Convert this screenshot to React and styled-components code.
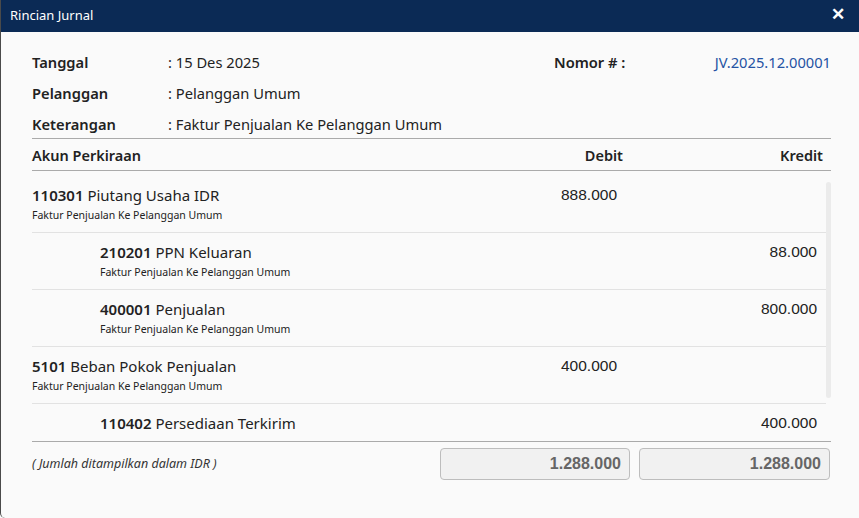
import React from "react";
import styled, { createGlobalStyle } from "styled-components";

const GlobalStyle = createGlobalStyle`
  html, body { margin: 0; padding: 0; background: #fafafa; }
  body { font-family: "Segoe UI", "Noto Sans", sans-serif; color: #222; }
`;

const Dialog = styled.div`
  width: 859px;
  height: 518px;
  box-sizing: border-box;
  background: #fafafa;
  border-left: 1px solid #4a4a4a;
  border-bottom-left-radius: 5px;
  display: flex;
  flex-direction: column;
  overflow: hidden;
`;

const TitleBar = styled.div`
  height: 32px;
  flex: none;
  background: #0b2a55;
  color: #fff;
  display: flex;
  align-items: center;
  justify-content: space-between;
  padding: 0 14px 3px 9px;
  font-size: 13px;
  box-sizing: border-box;
`;

const Close = styled.button`
  border: none;
  background: none;
  color: #fff;
  padding: 0;
  font-size: 17px;
  font-weight: 700;
  line-height: 1;
  cursor: pointer;
  font-family: "Liberation Sans", sans-serif;
`;

const Content = styled.div`
  padding: 0 28px 0 31px;
  display: flex;
  flex-direction: column;
`;

const Info = styled.div`
  display: grid;
  grid-template-columns: 136px 1fr 277px;
  row-gap: 11px;
  padding: 20px 0 4px;
  font-size: 14.7px;
  line-height: 20px;
`;

const Label = styled.div`
  font-weight: 600;
`;

const Value = styled.div`
  white-space: nowrap;
`;

const NoBlock = styled.div`
  display: flex;
  justify-content: space-between;
`;

const NoLabel = styled.span`
  font-weight: 600;
`;

const NoValue = styled.span`
  color: #2553a3;
  font-size: 14.7px;
`;

const cols = `1fr 200px 200px`;

const HeadRow = styled.div`
  display: grid;
  grid-template-columns: ${cols};
  border-top: 1px solid #aaa;
  border-bottom: 1px solid #aaa;
  height: 31px;
  align-items: center;
  font-size: 14.5px;
  font-weight: 600;
`;

const HeadCell = styled.div`
  text-align: ${(p) => (p.$right ? "right" : "left")};
  padding-right: ${(p) => (p.$right ? "8px" : "0")};
`;

const Body = styled.div`
  height: 266px;
  margin-bottom: 4px;
  display: flex;
  overflow: hidden;
`;

const List = styled.div`
  flex: 1;
  padding-top: 5px;
  overflow: hidden;
`;

const Track = styled.div`
  width: 5px;
  flex: none;
  padding-top: 11px;
`;

const Thumb = styled.div`
  height: 216px;
  background: #ebebeb;
  border-radius: 3px;
`;

const Row = styled.div`
  display: grid;
  grid-template-columns: ${cols};
  border-bottom: 1px solid #e2e2e2;
  padding: 9px 0 10px;
  height: 57px;
  box-sizing: border-box;

  &:last-child { border-bottom: none; }
`;

const Account = styled.div`
  padding-left: ${(p) => (p.$indent ? "68px" : "0")};
`;

const AccName = styled.div`
  font-size: 15px;
  line-height: 20px;
  white-space: nowrap;

  b { font-weight: 600; }
`;

const AccDesc = styled.div`
  font-size: 10.5px;
  line-height: 16px;
  margin-top: 2px;
  white-space: nowrap;
`;

const Amount = styled.div`
  font-family: "Liberation Sans", Arial, sans-serif;
  font-size: 15.5px;
  line-height: 20px;
  text-align: right;
  padding-right: 9px;
`;

const Footer = styled.div`
  display: grid;
  grid-template-columns: 1fr 190px 191px;
  column-gap: 9px;
  border-top: 1px solid #aaa;
  padding: 6px 1px 0 0;
  align-items: center;
`;

const Note = styled.div`
  font-size: 12.5px;
  font-style: italic;
  color: #333;
  padding-bottom: 1px;
`;

const TotalBox = styled.div`
  height: 32px;
  box-sizing: border-box;
  border: 1px solid #bdbdbd;
  border-radius: 4px;
  background: #f1f1f1;
  display: flex;
  align-items: center;
  justify-content: flex-end;
  padding-right: 8px;
  font-family: "Liberation Sans", Arial, sans-serif;
  font-size: 16px;
  font-weight: 700;
  color: #666;
`;

const lines = [
  { code: "110301", name: "Piutang Usaha IDR", debit: "888.000", kredit: "" },
  { code: "210201", name: "PPN Keluaran", debit: "", kredit: "88.000", indent: true },
  { code: "400001", name: "Penjualan", debit: "", kredit: "800.000", indent: true },
  { code: "5101", name: "Beban Pokok Penjualan", debit: "400.000", kredit: "" },
  { code: "110402", name: "Persediaan Terkirim", debit: "", kredit: "400.000", indent: true },
];

export default function App() {
  return (
    <>
      <GlobalStyle />
      <Dialog>
        <TitleBar>
          <span>Rincian Jurnal</span>
          <Close aria-label="Tutup">✕</Close>
        </TitleBar>
        <Content>
          <Info>
            <Label>Tanggal</Label>
            <Value>: 15 Des 2025</Value>
            <NoBlock>
              <NoLabel>Nomor # :</NoLabel>
              <NoValue>JV.2025.12.00001</NoValue>
            </NoBlock>
            <Label>Pelanggan</Label>
            <Value>: Pelanggan Umum</Value>
            <div />
            <Label>Keterangan</Label>
            <Value>: Faktur Penjualan Ke Pelanggan Umum</Value>
            <div />
          </Info>
          <HeadRow>
            <HeadCell>Akun Perkiraan</HeadCell>
            <HeadCell $right>Debit</HeadCell>
            <HeadCell $right>Kredit</HeadCell>
          </HeadRow>
          <Body>
            <List>
              {lines.map((l) => (
                <Row key={l.code}>
                  <Account $indent={l.indent}>
                    <AccName>
                      <b>{l.code}</b> {l.name}
                    </AccName>
                    <AccDesc>Faktur Penjualan Ke Pelanggan Umum</AccDesc>
                  </Account>
                  <Amount>{l.debit}</Amount>
                  <Amount>{l.kredit}</Amount>
                </Row>
              ))}
            </List>
            <Track>
              <Thumb />
            </Track>
          </Body>
          <Footer>
            <Note>( Jumlah ditampilkan dalam IDR )</Note>
            <TotalBox>1.288.000</TotalBox>
            <TotalBox>1.288.000</TotalBox>
          </Footer>
        </Content>
      </Dialog>
    </>
  );
}
